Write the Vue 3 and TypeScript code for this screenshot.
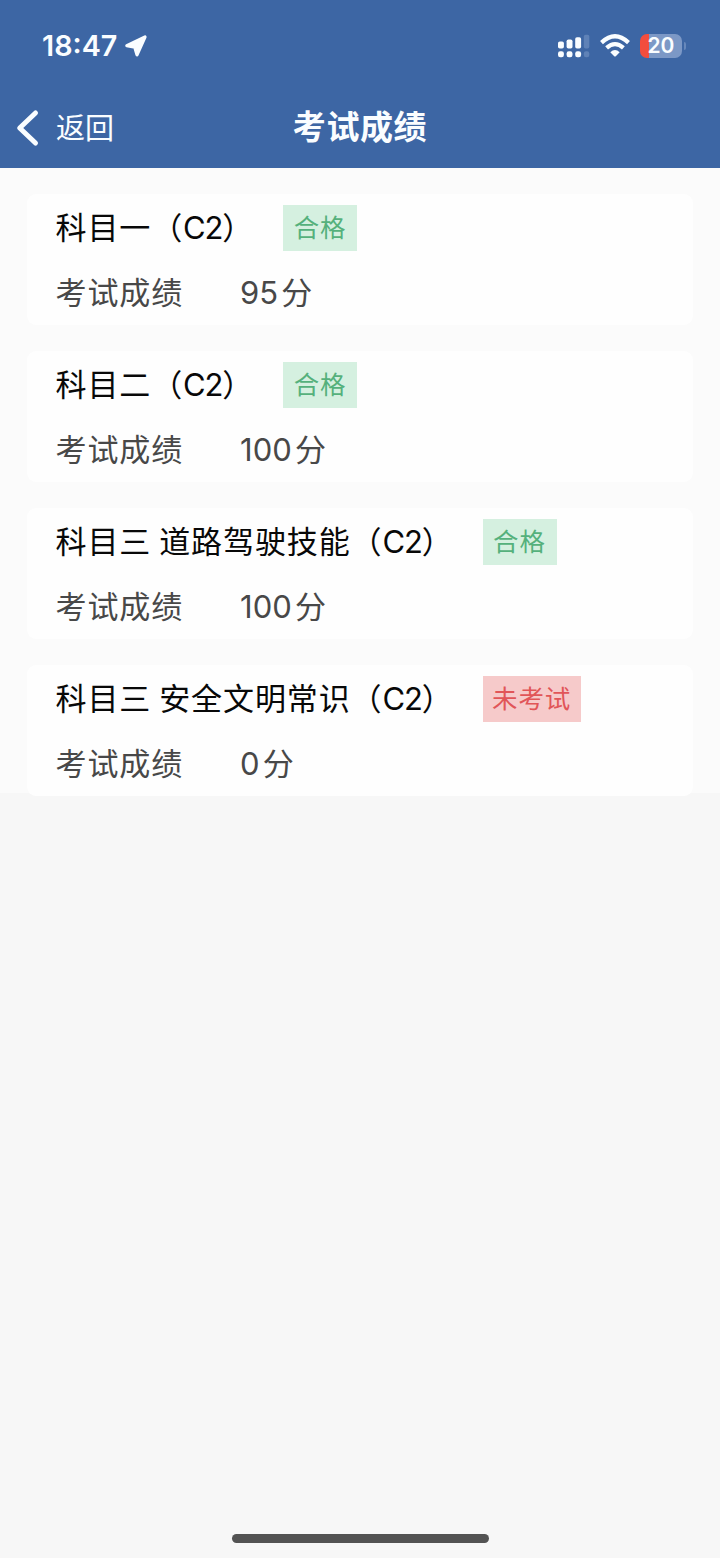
<script setup lang="ts">
interface Exam {
  name: string
  part?: string
  license: string
  status: string
  passed: boolean
  score: number
}

const exams: Exam[] = [
  { name: '科目一', license: 'C2', status: '合格', passed: true, score: 95 },
  { name: '科目二', license: 'C2', status: '合格', passed: true, score: 100 },
  { name: '科目三', part: '道路驾驶技能', license: 'C2', status: '合格', passed: true, score: 100 },
  { name: '科目三', part: '安全文明常识', license: 'C2', status: '未考试', passed: false, score: 0 },
]
</script>

<template>
  <div class="screen">
    <header class="top">
      <div class="status-bar">
        <span class="clock">18:47</span>
        <svg class="location" width="24" height="24" viewBox="0 0 24 24">
          <path d="M21 3 13 20.800 10.800 13.200 2.800 11.600Z" fill="#fafdff" stroke="#fafdff" stroke-width="3.200" stroke-linejoin="round" />
        </svg>
        <svg class="signal" width="33" height="24" viewBox="0 0 33 24">
          <g fill="#fafdff">
            <rect x="1" y="7.500" width="5.900" height="7" rx="1.800" />
            <rect x="9.600" y="5.500" width="5.900" height="9" rx="1.800" />
            <rect x="18.200" y="3.300" width="5.900" height="11.200" rx="1.800" />
            <rect x="1" y="17.300" width="5.900" height="6" rx="2.200" />
            <rect x="9.600" y="17.300" width="5.900" height="6" rx="2.200" />
            <rect x="18.200" y="17.300" width="5.900" height="6" rx="2.200" />
          </g>
          <g fill="#5f82b7">
            <rect x="26.800" y="0.700" width="5.500" height="13.800" rx="1.800" />
            <rect x="26.800" y="17.300" width="5.500" height="6" rx="2.200" />
          </g>
        </svg>
        <svg class="wifi" width="30" height="24" viewBox="0 0 30 24">
          <g fill="none" stroke="#fafdff" stroke-width="4.200">
            <path d="M1.500 8.600Q15-4 28.500 8.600" />
            <path d="M6.600 13.900Q15 6.300 23.400 13.900" />
          </g>
          <path d="M10.300 18.200Q15 14 19.700 18.200L15.800 22.200Q15 22.900 14.200 22.200Z" fill="#fafdff" />
        </svg>
        <div class="battery">
          <span class="level">20</span>
        </div>
        <i class="battery-cap"></i>
      </div>
      <nav class="nav">
        <button class="back" type="button">
          <svg width="24" height="38" viewBox="0 0 24 38">
            <path d="M19.500 4 3.700 19 19.500 34" fill="none" stroke="#fafdff" stroke-width="5" stroke-linecap="round" stroke-linejoin="round" />
          </svg>
          <span class="back-text">返回</span>
        </button>
        <h1 class="heading">考试成绩</h1>
      </nav>
    </header>

    <main class="list">
      <section v-for="(exam, i) in exams" :key="i" class="card">
        <div class="title-row">
          <span class="cjk">{{ exam.name }}</span>
          <span v-if="exam.part" class="cjk part">{{ exam.part }}</span>
          <span class="cjk license">（<span class="code">{{ exam.license }}</span>）</span>
          <span class="tag" :class="{ fail: !exam.passed }">{{ exam.status }}</span>
        </div>
        <div class="score-row">
          <span class="cjk label">考试成绩</span>
          <span class="score">{{ exam.score }}</span>
          <span class="cjk">分</span>
        </div>
      </section>
    </main>

    <div class="home-indicator"></div>
  </div>
</template>

<style>
body {
  margin: 0;
  background: #f7f7f7;
}
</style>

<style scoped>
.screen {
  box-sizing: border-box;
  display: flex;
  flex-direction: column;
  width: 720px;
  height: 1558px;
  overflow: hidden;
  background: #f7f7f7;
  font-family: Inter, 'Noto Sans CJK SC', sans-serif;
}
.top {
  height: 168px;
  flex: none;
  background: #3d66a4;
  color: #fafdff;
}
.status-bar {
  display: flex;
  align-items: center;
  height: 88px;
  padding: 3px 34px 0 42px;
  box-sizing: border-box;
}
.clock {
  width: 76px;
  padding-top: 1px;
  font-size: 28.7px;
  font-weight: 600;
  line-height: 32px;
  white-space: nowrap;
}
.location {
  margin-left: 6px;
}
.signal {
  margin-left: auto;
}
.wifi {
  margin-left: 10px;
}
.battery {
  display: flex;
  align-items: center;
  justify-content: center;
  width: 42px;
  height: 24px;
  margin-left: 10px;
  border-radius: 7px;
  background: linear-gradient(90deg, #f24d3d 0 8.5px, #7c98c6 8.5px);
}
.level {
  font-size: 21px;
  font-weight: 600;
  line-height: 24px;
}
.battery-cap {
  width: 2px;
  height: 8px;
  margin-left: 2px;
  border-radius: 0 3px 3px 0;
  background: #6788bb;
}
.nav {
  display: grid;
  grid-template-columns: 1fr auto 1fr;
  align-items: center;
  height: 80px;
}
.back {
  display: flex;
  align-items: center;
  gap: 16px;
  padding: 0 0 0 16px;
  border: 0;
  background: none;
  color: inherit;
  font: inherit;
  font-size: 29px;
  line-height: 40px;
}
.back-text {
  padding-top: 2px;
}
.heading {
  margin: 0;
  padding-bottom: 2px;
  font-size: 33px;
  font-weight: 700;
  line-height: 44px;
  letter-spacing: 0.6px;
}
.list {
  box-sizing: border-box;
  display: flex;
  flex-direction: column;
  gap: 26px;
  flex: none;
  height: 625px;
  padding: 26px 27px 0;
  background: #fbfbfb;
}
.card {
  box-sizing: border-box;
  flex: none;
  height: 131px;
  padding: 11px 29px 0 28.5px;
  border-radius: 9px;
  background: #fefefe;
  font-size: 31px;
  letter-spacing: 0.9px;
  white-space: nowrap;
}
.title-row {
  display: flex;
  align-items: center;
  height: 46px;
  color: #080808;
}
.cjk {
  padding-bottom: 5px;
}
.part {
  margin-left: 8px;
}
.license {
  width: 106px;
}
.code {
  letter-spacing: -1.2px;
}
.tag {
  box-sizing: border-box;
  height: 46px;
  margin-left: 26px;
  padding: 0 11px 0 10.500px;
  background: #d5f0e0;
  color: #55b17c;
  font-size: 25.5px;
  line-height: 46px;
  letter-spacing: 0.8px;
}
.tag.fail {
  padding: 0 9.500px;
  background: #f6caca;
  color: #e15558;
}
.score-row {
  display: flex;
  align-items: center;
  height: 46px;
  margin-top: 19px;
  color: #484848;
}
.label {
  width: 184.5px;
}
.score {
  padding-bottom: 2px;
  margin-right: 3px;
  letter-spacing: 0.1px;
}
.home-indicator {
  width: 257px;
  height: 9px;
  margin: auto auto 15px 232px;
  border-radius: 5px;
  background: #535353;
}
</style>
